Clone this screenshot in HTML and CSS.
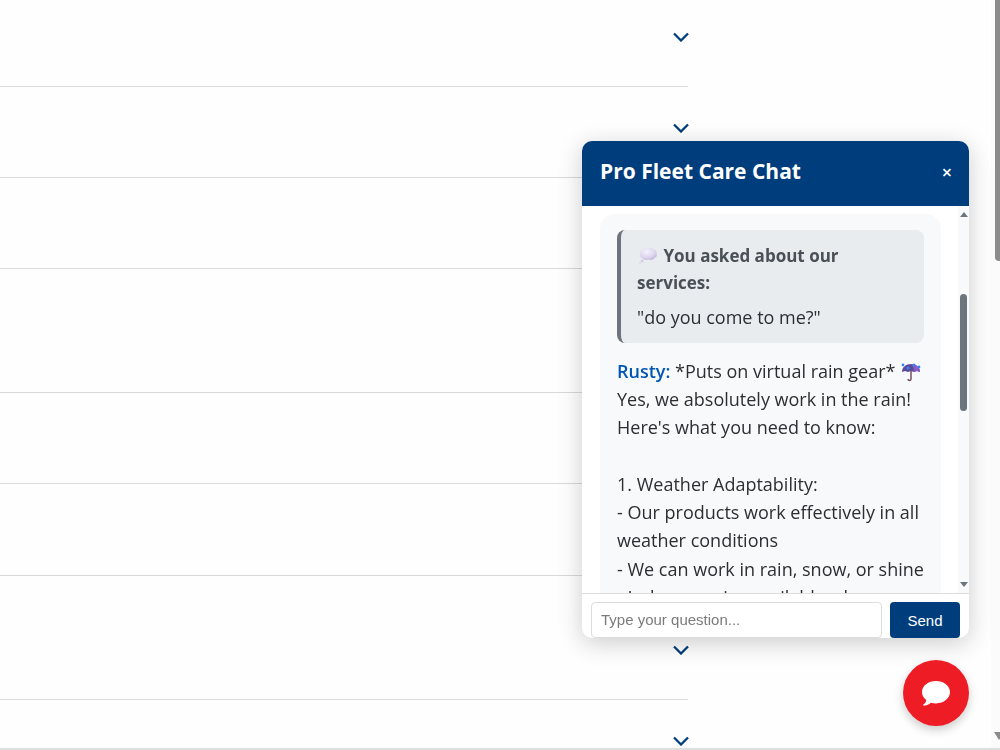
FILE: index.html
```html
<!DOCTYPE html>
<html lang="en">
<head>
<meta charset="utf-8">
<meta name="viewport" content="width=device-width, initial-scale=1">
<title>Pro Fleet Care</title>
<link rel="stylesheet" href="styles.css">
</head>
<body>
<main class="faq">
  <button class="faq-row first" aria-label="Expand question"><svg class="chevron" viewBox="0 0 16 10"><path d="M1 1.5 8 8.5 15 1.5"/></svg></button>
  <button class="faq-row" aria-label="Expand question"><svg class="chevron" viewBox="0 0 16 10"><path d="M1 1.5 8 8.5 15 1.5"/></svg></button>
  <button class="faq-row" aria-label="Expand question"><svg class="chevron" viewBox="0 0 16 10"><path d="M1 1.5 8 8.5 15 1.5"/></svg></button>
  <button class="faq-row tall" aria-label="Expand question"><svg class="chevron" viewBox="0 0 16 10"><path d="M1 1.5 8 8.5 15 1.5"/></svg></button>
  <button class="faq-row" aria-label="Expand question"><svg class="chevron" viewBox="0 0 16 10"><path d="M1 1.5 8 8.5 15 1.5"/></svg></button>
  <button class="faq-row medium" aria-label="Expand question"><svg class="chevron" viewBox="0 0 16 10"><path d="M1 1.5 8 8.5 15 1.5"/></svg></button>
  <button class="faq-row tall" aria-label="Expand question"><svg class="chevron" viewBox="0 0 16 10"><path d="M1 1.5 8 8.5 15 1.5"/></svg></button>
  <button class="faq-row" aria-label="Expand question"><svg class="chevron" viewBox="0 0 16 10"><path d="M1 1.5 8 8.5 15 1.5"/></svg></button>
</main>

<div class="page-scroll" aria-hidden="true">
  <span class="page-thumb"></span>
  <span class="page-arrow"></span>
</div>
<div class="page-edge"></div>

<section class="chat" aria-label="Pro Fleet Care Chat">
  <header class="chat-header">
    <h2 class="chat-title">Pro Fleet Care Chat</h2>
    <button class="chat-close" aria-label="Close">×</button>
  </header>
  <div class="chat-body">
    <div class="messages">
      <article class="message">
        <blockquote class="quote">
          <strong class="quote-title"><svg class="emoji" viewBox="0 0 20 20"><defs><radialGradient id="cloud" cx=".4" cy=".3" r=".8"><stop offset="0" stop-color="#f6f2fc"/><stop offset=".6" stop-color="#ddd5ee"/><stop offset="1" stop-color="#b8add3"/></radialGradient></defs><path fill="url(#cloud)" d="M5.500 3.500C6.500 2 9 2 10 2.600c2-1 5-.6 6 1.200 2 .2 3 2 2.500 3.800 1 2 0 4-2 4.500-1 2-4 2.500-6 1.500-2 1-5 .5-6-1.500-2 0-3-2-2.300-4C1.600 6 3 3.800 5.500 3.500Z"/><circle cx="4" cy="15" r="1.500" fill="#d5cbe9"/><circle cx="2" cy="17" r=".8" fill="#d5cbe9"/></svg> You asked about our services:</strong>
          <p class="quote-text">"do you come to me?"</p>
        </blockquote>
        <p class="reply"><strong class="sender">Rusty:</strong> *Puts on virtual rain gear* <svg class="emoji" viewBox="0 0 20 20"><path fill="#5a4a9c" d="M1 10C1 5 5 2 10 2s9 3 9 8l-3-1-3 1-3-1-3 1-3-1Z"/><path fill="#8b5cc5" d="M10 2c5 0 9 3 9 8l-3-1-3 1c0-4-1-6-3-8Z"/><path d="M10 9v8c0 2-3 2-3 0" fill="none" stroke="#78505b" stroke-width="1.500"/><g fill="#3f82f6"><circle cx="2" cy="3" r="1.400"/><circle cx="7" cy="6" r="1.500"/><circle cx="13" cy="3" r="1.500"/><circle cx="18" cy="5" r="1.400"/></g></svg></p>
        <p class="reply">Yes, we absolutely work in the rain! Here's what you need to know:</p>
        <p class="reply section">1. Weather Adaptability:<br>- Our products work effectively in all weather conditions</p>
        <p class="reply item">- We can work in rain, snow, or shine<br>- Indoor service available when needed</p>
      </article>
    </div>
    <div class="chat-scroll" aria-hidden="true">
      <span class="arrow-up"></span>
      <span class="chat-thumb"></span>
      <span class="arrow-down"></span>
    </div>
  </div>
  <form class="chat-form">
    <input class="chat-input" type="text" placeholder="Type your question..." aria-label="Type your question">
    <button class="chat-send" type="button">Send</button>
  </form>
</section>

<button class="chat-toggle" aria-label="Open chat"><svg class="bubble" viewBox="0 0 28 25"><path fill="#fff" d="M14 0C6.300 0 0 4.900 0 11c0 3.200 1.600 6 4.200 8 .2 1.800-1.200 3.600-3 4.700-.5.400-.2.900.4.900 3 0 5.500-1.200 7.200-2.900 1.600.5 3.400.700 5.200.700 7.700 0 14-5 14-11.300S21.700 0 14 0Z"/></svg></button>
</body>
</html>
```
FILE: styles.css
```css
* { box-sizing: border-box; }

body {
  margin: 0;
  height: 100vh;
  overflow: hidden;
  background: #fefefe;
  color: #2b2f33;
  font-family: "Open Sans", sans-serif;
  font-size: 18px;
}

button { font: inherit; border: 0; padding: 0; cursor: pointer; }

/* Question list */
.faq {
  display: flex;
  flex-direction: column;
  width: 69%;
  max-height: 100vh;
  overflow: hidden;
}
.faq-row {
  display: flex;
  flex: none;
  align-items: flex-end;
  justify-content: flex-end;
  height: 91px;
  padding-bottom: 44px;
  margin-right: 2px;
  background: none;
  border-bottom: 1px solid #d9d9d9;
}
.faq-row.first { height: 87px; }
.faq-row.medium { height: 92px; }
.faq-row.tall { height: 124px; }
.chevron {
  width: 16px;
  height: 10px;
  margin-right: -1px;
  fill: none;
  stroke: #003d7c;
  stroke-width: 2.3;
}

/* Page scrollbar */
.page-scroll {
  position: fixed;
  top: 0;
  right: 0;
  bottom: 0;
  width: 9px;
  overflow: hidden;
  background: #fbfbfb;
}
.page-thumb {
  position: absolute;
  top: -8px;
  left: 4px;
  width: 10px;
  height: 269px;
  border-radius: 4px;
  background: #8b8b8b;
}
.page-arrow {
  position: absolute;
  bottom: 10px;
  left: 3px;
  border: 5px solid transparent;
  border-top: 8px solid #8b8b8b;
  border-bottom: 0;
}
.page-edge { position: fixed; left: 0; right: 0; bottom: 0; height: 2px; background: #dfdfdf; }

/* Chat window */
.chat {
  position: fixed;
  right: 31px;
  bottom: 112px;
  display: flex;
  flex-direction: column;
  width: 387px;
  height: 497px;
  overflow: hidden;
  border-radius: 10px;
  background: #fff;
  box-shadow: 0 5px 25px rgba(0, 0, 0, .2);
}
.chat-header {
  display: flex;
  flex: none;
  align-items: center;
  justify-content: space-between;
  height: 65px;
  padding: 0 17px 4px 18px;
  background: #003d7c;
  color: #fff;
}
.chat-title { margin: 0; padding-bottom: 2px; font-size: 21px; line-height: 28px; }
.chat-close { background: none; color: #fff; font-size: 18px; font-weight: 600; line-height: 20px; }
.chat-body { display: flex; flex: 1; min-height: 0; }
.messages { flex: 1; min-width: 0; overflow: hidden; padding: 8px 17px 0 18px; }
.message { padding: 16px 17px; border-radius: 15px; background: #f8f9fb; }
.quote {
  margin: 0 0 14px;
  padding: 12px 16px;
  border-left: 4px solid #6c757d;
  border-radius: 8px;
  background: #e8ecef;
}
.quote-title { display: block; color: #495057; font-size: 17px; line-height: 27px; }
.quote-text { margin: 8px 0 0; line-height: 27px; }
.reply { margin: 0; line-height: 28px; }
.reply.section { margin-top: 29px; }
.reply.item { margin-top: 1px; }
.sender { color: #0056b3; font-weight: 600; }
.emoji { width: 22px; height: 20px; vertical-align: -4px; }

.chat-scroll {
  display: flex;
  flex-direction: column;
  align-items: center;
  flex: none;
  width: 11px;
  padding: 6px 0;
  background: #f8f9fb;
}
.arrow-up { border: 4px solid transparent; border-bottom: 5px solid #6c757d; border-top: 0; }
.arrow-down { border: 4px solid transparent; border-top: 5px solid #6c757d; border-bottom: 0; margin-top: auto; }
.chat-thumb { width: 7px; height: 117px; margin-top: 77px; border-radius: 4px; background: #6c757d; }

.chat-form {
  display: flex;
  flex: none;
  gap: 8px;
  height: 45px;
  padding: 8px 9px 0;
  border-top: 1px solid #ddd;
  font-family: "Liberation Sans", Arial, sans-serif;
}
.chat-input {
  flex: 1;
  min-width: 0;
  padding: 0 9px 2px;
  border: 1px solid #ddd;
  border-radius: 4px;
  background: #fff;
  color: #333;
  font: 15px "Liberation Sans", Arial, sans-serif;
}
.chat-input::placeholder { color: #7b7b7b; }
.chat-send { width: 70px; border-radius: 4px; background: #003d7c; color: #fff; font-size: 15px; }

.chat-toggle {
  position: fixed;
  right: 31px;
  bottom: 24px;
  display: grid;
  place-items: center;
  width: 66px;
  height: 66px;
  border-radius: 50%;
  background: #ee1c25;
  box-shadow: 0 4px 10px rgba(0, 0, 0, .2);
}
.bubble { width: 28px; height: 25px; }
```
